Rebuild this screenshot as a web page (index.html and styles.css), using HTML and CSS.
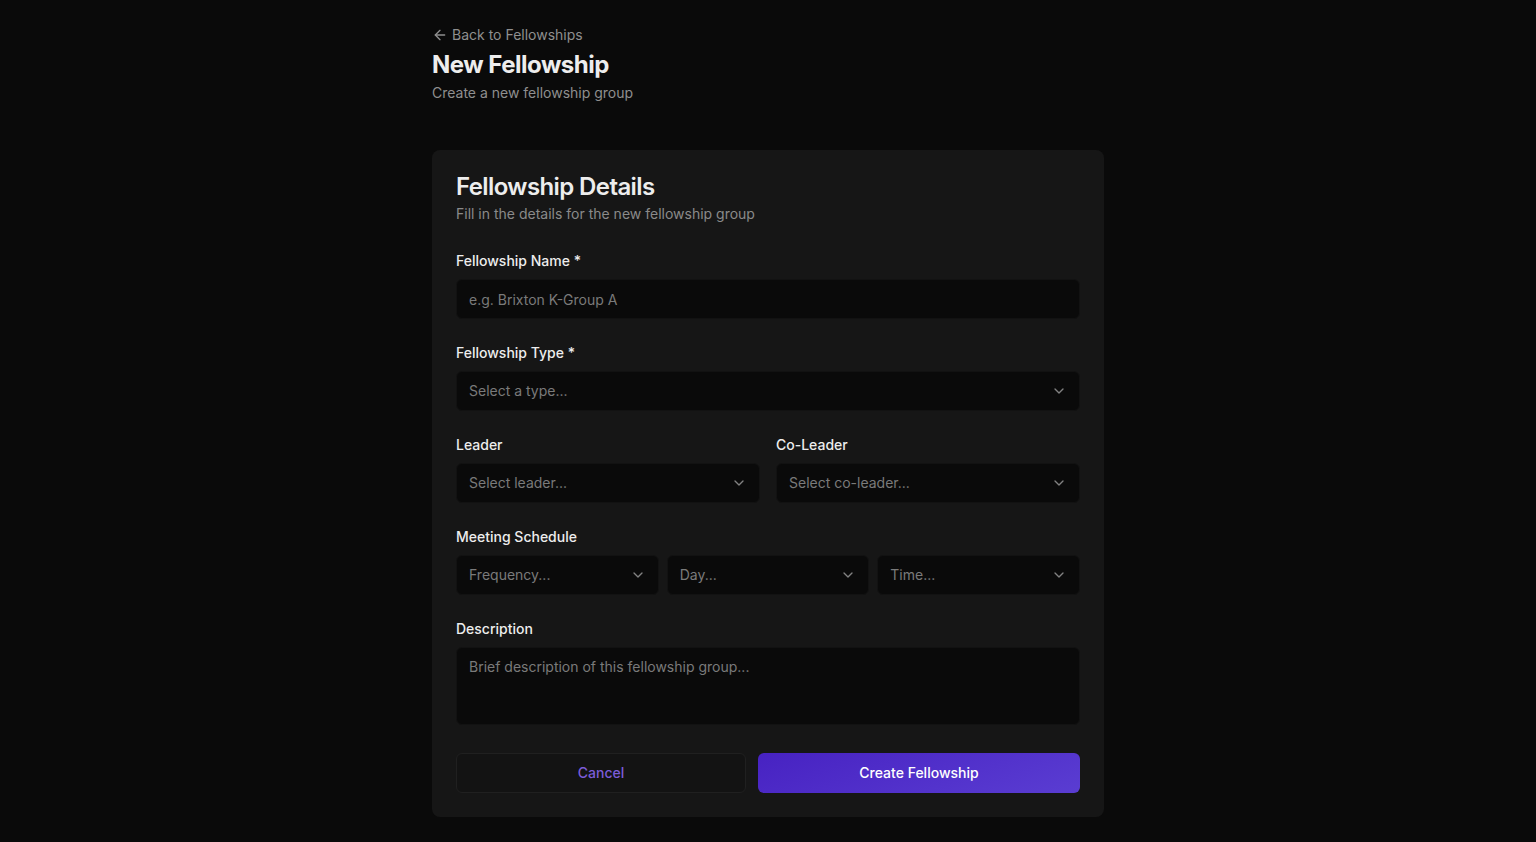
FILE: index.html
```html
<!DOCTYPE html>
<html lang="en">
<head>
<meta charset="utf-8">
<title>New Fellowship</title>
<link rel="stylesheet" href="styles.css">
</head>
<body>
<main class="page">
  <header class="page-header">
    <a class="back-link" href="#">
      <svg class="back-icon" viewBox="0 0 24 24" width="16" height="16" fill="none" stroke="currentColor" stroke-width="2" stroke-linecap="round" stroke-linejoin="round"><path d="m12 19-7-7 7-7"/><path d="M19 12H5"/></svg>
      <span>Back to Fellowships</span>
    </a>
    <h1 class="page-title">New Fellowship</h1>
    <p class="page-subtitle">Create a new fellowship group</p>
  </header>

  <section class="card">
    <div class="card-header">
      <h2 class="card-title">Fellowship Details</h2>
      <p class="card-desc">Fill in the details for the new fellowship group</p>
    </div>

    <form class="form">
      <div class="field">
        <label class="label">Fellowship Name *</label>
        <input class="input" type="text" placeholder="e.g. Brixton K-Group A">
      </div>

      <div class="field">
        <label class="label">Fellowship Type *</label>
        <div class="select"><span>Select a type...</span><svg class="chev" viewBox="0 0 24 24" width="16" height="16" fill="none" stroke="currentColor" stroke-width="2" stroke-linecap="round" stroke-linejoin="round"><path d="m6 9 6 6 6-6"/></svg></div>
      </div>

      <div class="row two">
        <div class="field">
          <label class="label">Leader</label>
          <div class="select"><span>Select leader...</span><svg class="chev" viewBox="0 0 24 24" width="16" height="16" fill="none" stroke="currentColor" stroke-width="2" stroke-linecap="round" stroke-linejoin="round"><path d="m6 9 6 6 6-6"/></svg></div>
        </div>
        <div class="field">
          <label class="label">Co-Leader</label>
          <div class="select"><span>Select co-leader...</span><svg class="chev" viewBox="0 0 24 24" width="16" height="16" fill="none" stroke="currentColor" stroke-width="2" stroke-linecap="round" stroke-linejoin="round"><path d="m6 9 6 6 6-6"/></svg></div>
        </div>
      </div>

      <div class="field">
        <label class="label">Meeting Schedule</label>
        <div class="row three">
          <div class="select"><span>Frequency...</span><svg class="chev" viewBox="0 0 24 24" width="16" height="16" fill="none" stroke="currentColor" stroke-width="2" stroke-linecap="round" stroke-linejoin="round"><path d="m6 9 6 6 6-6"/></svg></div>
          <div class="select"><span>Day...</span><svg class="chev" viewBox="0 0 24 24" width="16" height="16" fill="none" stroke="currentColor" stroke-width="2" stroke-linecap="round" stroke-linejoin="round"><path d="m6 9 6 6 6-6"/></svg></div>
          <div class="select"><span>Time...</span><svg class="chev" viewBox="0 0 24 24" width="16" height="16" fill="none" stroke="currentColor" stroke-width="2" stroke-linecap="round" stroke-linejoin="round"><path d="m6 9 6 6 6-6"/></svg></div>
        </div>
      </div>

      <div class="field">
        <label class="label">Description</label>
        <textarea class="textarea" placeholder="Brief description of this fellowship group..."></textarea>
      </div>

      <div class="actions">
        <button type="button" class="btn btn-cancel">Cancel</button>
        <button type="button" class="btn btn-primary">Create Fellowship</button>
      </div>
    </form>
  </section>
</main>
</body>
</html>
```

FILE: styles.css
```css
* { box-sizing: border-box; }

html, body {
  margin: 0;
  padding: 0;
  background: #0a0a0a;
  color: #ededed;
  font-family: Inter, "Noto Sans", sans-serif;
  -webkit-font-smoothing: antialiased;
}

.page {
  width: 672px;
  margin: 0 auto;
  padding-top: 25px;
}

.page-header {
  display: flex;
  flex-direction: column;
  align-items: flex-start;
}

.back-link {
  display: inline-flex;
  align-items: center;
  gap: 4px;
  color: #8f8f8f;
  font-size: 14px;
  line-height: 20px;
  text-decoration: none;
  margin-bottom: 4px;
}

.back-icon { display: block; }

.page-title {
  margin: 0;
  font-size: 24px;
  line-height: 32px;
  font-weight: 700;
  color: #ededed;
  letter-spacing: -0.5px;
}

.page-subtitle {
  margin: 2px 0 0;
  font-size: 14px;
  line-height: 20px;
  color: #8f8f8f;
}

.card {
  margin-top: 47px;
  background: #161616;
  border-radius: 8px;
  padding: 25px 24px 24px;
}

.card-header {
  display: flex;
  flex-direction: column;
  gap: 5px;
}

.card-title {
  margin: 0;
  font-size: 24px;
  line-height: 24px;
  font-weight: 600;
  letter-spacing: -0.6px;
  color: #ededed;
}

.card-desc {
  margin: 0;
  font-size: 14px;
  line-height: 20px;
  color: #8a8a8a;
}

.form {
  margin-top: 27px;
  display: flex;
  flex-direction: column;
  gap: 24px;
}

.field {
  display: flex;
  flex-direction: column;
  gap: 8px;
  min-width: 0;
}

.label {
  font-size: 14px;
  line-height: 20px;
  font-weight: 500;
  color: #ededed;
}

.row { display: grid; }
.row.two { grid-template-columns: 1fr 1fr; gap: 16px; }
.row.three { grid-template-columns: 1fr 1fr 1fr; gap: 8px; }

.input, .select, .textarea {
  width: 100%;
  background: #0a0a0a;
  border: 1px solid #121212;
  border-radius: 6px;
  font-family: inherit;
  font-size: 14px;
  line-height: 20px;
  color: #ededed;
}

.input {
  height: 40px;
  padding: 0 12px;
  outline: none;
}

.input::placeholder, .textarea::placeholder { color: #7a7a7a; opacity: 1; }

.select {
  height: 40px;
  padding: 0 12px;
  display: flex;
  align-items: center;
  justify-content: space-between;
  color: #7a7a7a;
}

.chev {
  color: #a0a0a0;
  opacity: 0.8;
  flex: none;
  width: 16px;
  height: 16px;
}

.textarea {
  display: block;
  height: 78px;
  padding: 9px 12px 7px;
  resize: none;
  outline: none;
}

.actions {
  display: flex;
  gap: 12px;
  margin-top: 4px;
}

.btn {
  height: 40px;
  border-radius: 6px;
  font-family: inherit;
  font-size: 14px;
  line-height: 20px;
  font-weight: 500;
  cursor: pointer;
  min-width: 0;
}

.btn-cancel {
  flex: none;
  width: 290px;
  background: #131313;
  border: 1px solid #202020;
  color: #7c5cd8;
}

.btn-primary {
  flex: 1;
  border: none;
  color: #ffffff;
  background: linear-gradient(160deg, #4722c2 0%, #5a3dd2 100%);
}
```
